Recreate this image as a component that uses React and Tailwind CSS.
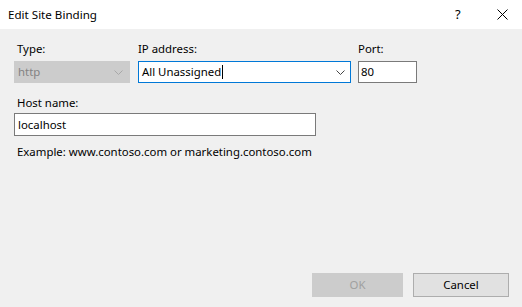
import React from "react";

const Chevron = ({ color }) => (
  <svg width="9" height="5" viewBox="0 0 9 5" className="shrink-0">
    <path d="M0.5 0.5 L4.5 4.5 L8.5 0.5" fill="none" stroke={color} strokeWidth="1" />
  </svg>
);

export default function App() {
  return (
    <div
      className="w-[522px] h-[307px] bg-[#f0f0f0] flex flex-col text-[11.4px] text-black overflow-hidden"
      style={{ fontFamily: '"Noto Sans", "Open Sans", sans-serif' }}
    >
      {/* Title bar */}
      <div className="h-[29px] bg-white flex items-center shrink-0">
        <div className="pl-[8px] flex-1 text-[11.6px] text-black">Edit Site Binding</div>
        <div className="w-[10px] text-[13px] mr-[32px] text-black">?</div>
        <svg width="11" height="11" viewBox="0 0 11 11" className="mr-[14px]">
          <path d="M0.5 0.5 L10.5 10.5 M10.5 0.5 L0.5 10.5" stroke="#000" strokeWidth="1" />
        </svg>
      </div>

      {/* Body */}
      <div className="flex-1 flex flex-col pl-[14px] pt-[12px]">
        <div className="flex">
          <div className="flex flex-col w-[116px]">
            <div className="pl-[3px] h-[20px] leading-[16px]">Type:</div>
            <div className="h-[22px] bg-[#cccccc] border border-[#cccccc] flex items-center pl-[3px] pr-[6px] text-[#838383]">
              <span className="flex-1">http</span>
              <Chevron color="#a8a8a8" />
            </div>
          </div>
          <div className="flex flex-col w-[213px] ml-[8px]">
            <div className="h-[20px] leading-[16px]">IP address:</div>
            <div className="h-[22px] bg-white border border-[#0078d7] flex items-center pl-[3px] pr-[5px]">
              <span>All Unassigned</span>
              <span className="w-px h-[14px] bg-black ml-[1px]" />
              <span className="flex-1" />
              <Chevron color="#444" />
            </div>
          </div>
          <div className="flex flex-col w-[59px] ml-[7px]">
            <div className="h-[20px] leading-[16px]">Port:</div>
            <div className="h-[22px] bg-white border border-[#7a7a7a] flex items-center pl-[2px]">80</div>
          </div>
        </div>

        <div className="pl-[3px] h-[20px] leading-[16px] mt-[10px] pt-[2px]">Host name:</div>
        <div className="w-[302px] h-[23px] bg-white border border-[#7a7a7a] flex items-center pl-[3px]">
          localhost
        </div>
        <div className="pl-[3px] mt-[8px] leading-[16px]">Example: www.contoso.com or marketing.contoso.com</div>

        <div className="flex-1" />
        <div className="flex justify-end pr-[13px] pb-[10px] gap-[10px]">
          <div className="w-[91px] h-[24px] bg-[#cccccc] border border-[#cccccc] flex items-center justify-center text-[#a0a0a0]">
            OK
          </div>
          <div className="w-[96px] h-[24px] bg-[#e1e1e1] border border-[#adadad] flex items-center justify-center">
            Cancel
          </div>
        </div>
      </div>
    </div>
  );
}
